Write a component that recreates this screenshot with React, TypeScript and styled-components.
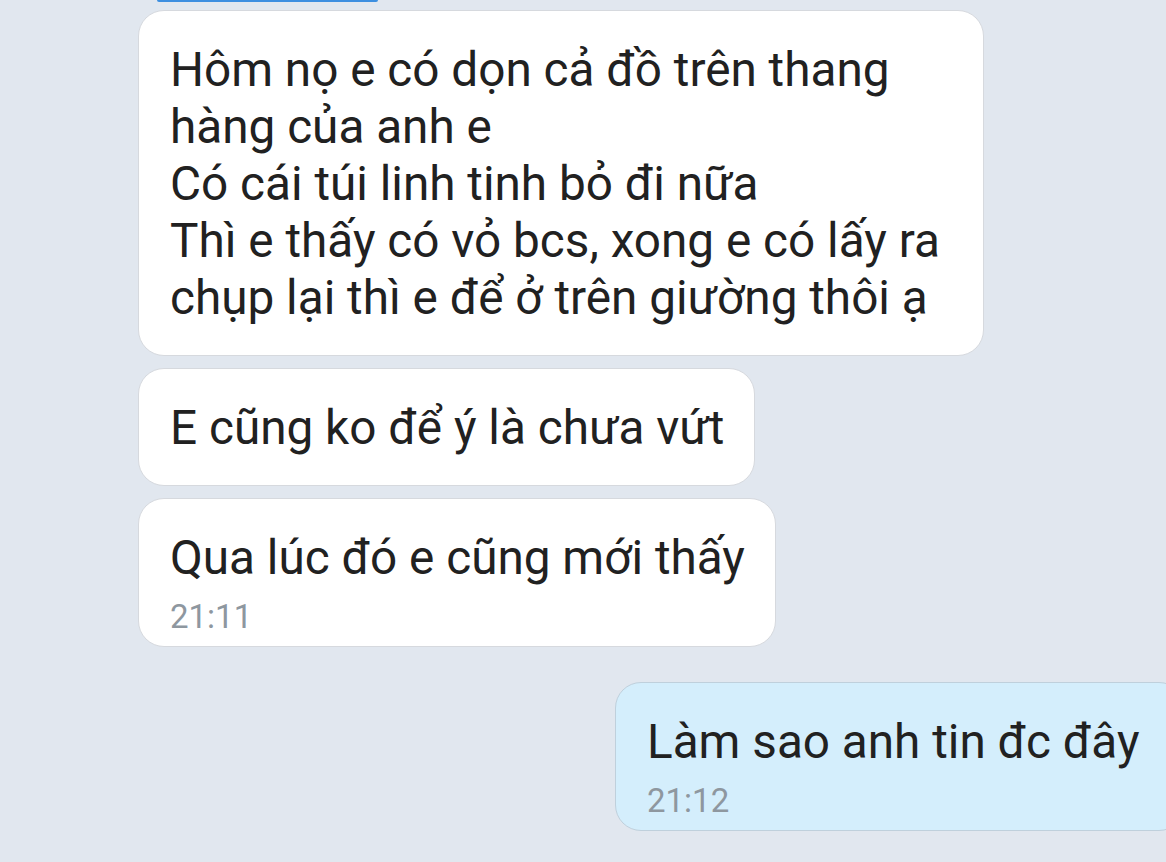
import React from "react";
import styled, { createGlobalStyle } from "styled-components";

const Global = createGlobalStyle`
  html, body { margin: 0; padding: 0; background: #e1e7ef; }
  body { font-family: Roboto, "Noto Sans", sans-serif; -webkit-font-smoothing: antialiased; }
`;

const Screen = styled.div`
  width: 1166px;
  height: 862px;
  overflow: hidden;
  background: #e1e7ef;
  display: flex;
  flex-direction: column;
`;

const TopStrip = styled.div`
  margin-left: 157px;
  width: 221px;
  height: 2px;
  background: #3d8fe0;
  border-radius: 0 0 4px 4px;
`;

const Thread = styled.div`
  display: flex;
  flex-direction: column;
  align-items: flex-start;
  gap: 12px;
  padding: 8px 0 0 138px;
`;

const Bubble = styled.div<{ $out?: boolean; $wide?: boolean }>`
  box-sizing: border-box;
  width: ${(p) => (p.$wide ? "846px" : "auto")};
  padding: 31px 30px 28px 31px;
  border-radius: 26px;
  background: ${(p) => (p.$out ? "#d4eefc" : "#ffffff")};
  border: 1.5px solid ${(p) => (p.$out ? "#bfd0dc" : "#d6d9de")};
  color: #212121;
  font-size: 47.7px;
  line-height: 57px;
  white-space: pre-line;
`;

const Time = styled.div`
  font-size: 33px;
  line-height: 36px;
  color: #8e979f;
  margin-top: 12px;
  margin-bottom: -17px;
`;

const OutRow = styled.div`
  display: flex;
  padding-left: 615px;
  margin-top: 35px;
`;

const OutBubble = styled(Bubble)`
  width: 570px;
  flex-shrink: 0;
`;

export default function App() {
  return (
    <Screen>
      <Global />
      <TopStrip />
      <Thread>
        <Bubble $wide>
          {"Hôm nọ e có dọn cả đồ trên thang\nhàng của anh e\nCó cái túi linh tinh bỏ đi nữa\nThì e thấy có vỏ bcs, xong e có lấy ra\nchụp lại thì e để ở trên giường thôi ạ"}
        </Bubble>
        <Bubble>E cũng ko để ý là chưa vứt</Bubble>
        <Bubble>
          Qua lúc đó e cũng mới thấy
          <Time>21:11</Time>
        </Bubble>
      </Thread>
      <OutRow>
        <OutBubble $out>
          Làm sao anh tin đc đây
          <Time>21:12</Time>
        </OutBubble>
      </OutRow>
    </Screen>
  );
}
